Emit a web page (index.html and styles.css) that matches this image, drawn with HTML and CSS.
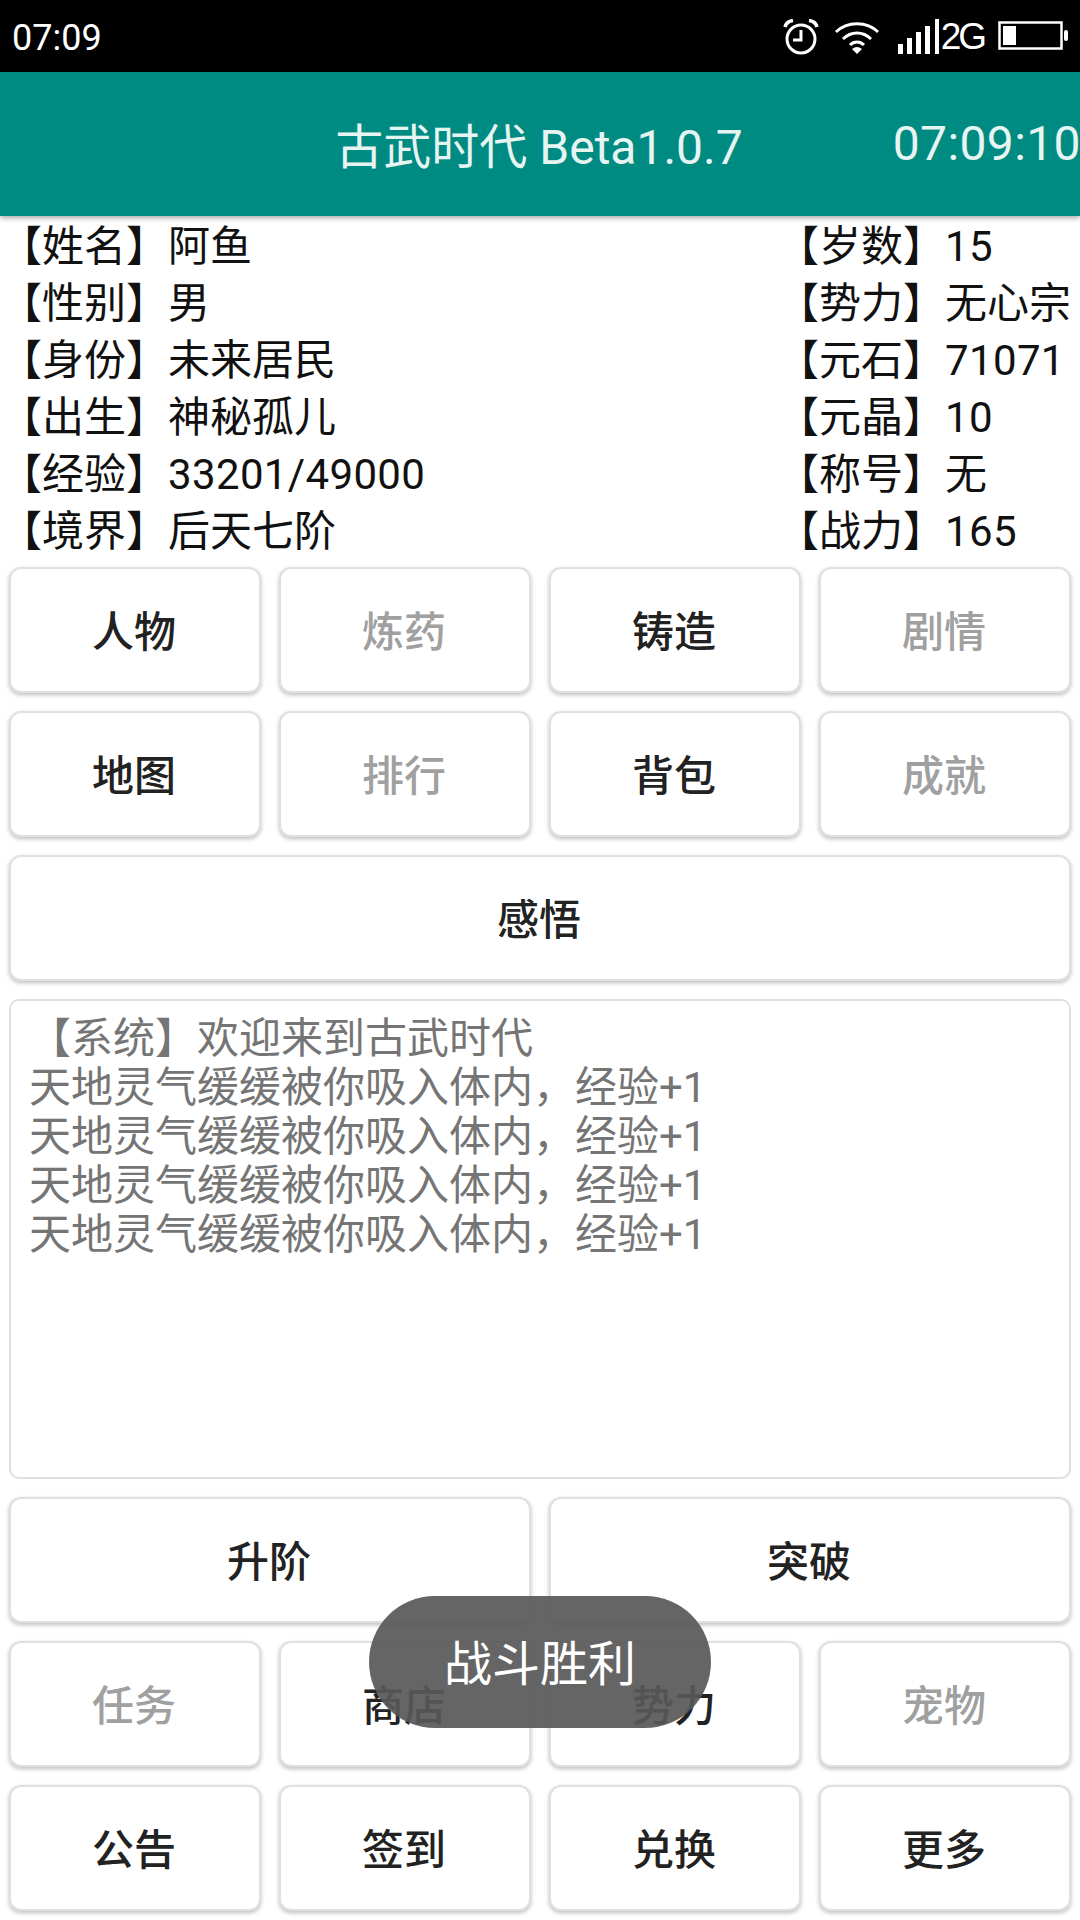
FILE: index.html
```html
<!DOCTYPE html>
<html lang="zh-CN">
<head>
<meta charset="utf-8">
<title>古武时代</title>
<link rel="stylesheet" href="styles.css">
</head>
<body>
<div class="screen">
  <header class="status">
    <span class="clock">07:09</span>
    <div class="status-icons">
      <svg class="ic-alarm" viewBox="0 0 36 36" width="36" height="36" fill="none" stroke="#fff"><circle cx="18" cy="20" r="14" stroke-width="3"/><path d="M18 11v10h-8" stroke-width="3"/><path d="M2 8C3 4 6 2 10 1.500M34 8C33 4 30 2 26 1.500" stroke-width="3.500"/></svg>
      <svg class="ic-wifi" viewBox="0 0 46 36" width="46" height="36" fill="none" stroke="#fff" stroke-width="3"><path d="M2 13C13 2 33 2 44 13"/><path d="M9 20C17 12 29 12 37 20"/><path d="M16 26C20 22 26 22 30 26"/><path d="M18 30L23 35L28 30Q23 26 18 30Z" fill="#fff" stroke="none"/></svg>
      <svg class="ic-signal" viewBox="0 0 42 36" width="42" height="36" fill="#fff"><rect x="0" y="25" width="5" height="10"/><rect x="9" y="19" width="5" height="16"/><rect x="18" y="13" width="5" height="22"/><rect x="27" y="7" width="5" height="28"/><rect x="37" y="0" width="4" height="35"/></svg>
      <span class="net">2G</span>
      <svg class="ic-batt" viewBox="0 0 72 32" width="72" height="32" fill="none"><rect x="1.500" y="1.500" width="62" height="26" stroke="#fff" stroke-width="2.500"/><rect x="5" y="5" width="13" height="19" fill="#fff"/><rect x="66" y="9" width="4" height="11" rx="2" fill="#fff"/></svg>
    </div>
  </header>

  <div class="toolbar">
    <span class="title">古武时代 Beta1.0.7</span>
    <span class="toolbar-time">07:09:10</span>
  </div>

  <section class="info">
    <div class="info-col">
      <div>【姓名】阿鱼</div>
      <div>【性别】男</div>
      <div>【身份】未来居民</div>
      <div>【出生】神秘孤儿</div>
      <div>【经验】<span class="num">33201/49000</span></div>
      <div>【境界】后天七阶</div>
    </div>
    <div class="info-col info-right">
      <div>【岁数】<span class="num">15</span></div>
      <div>【势力】无心宗</div>
      <div>【元石】<span class="num">71071</span></div>
      <div>【元晶】<span class="num">10</span></div>
      <div>【称号】无</div>
      <div>【战力】<span class="num">165</span></div>
    </div>
  </section>

  <main class="panel">
    <div class="row four">
      <div class="btn">人物</div>
      <div class="btn off">炼药</div>
      <div class="btn">铸造</div>
      <div class="btn off">剧情</div>
    </div>
    <div class="row four">
      <div class="btn">地图</div>
      <div class="btn off">排行</div>
      <div class="btn">背包</div>
      <div class="btn off">成就</div>
    </div>
    <div class="row one">
      <div class="btn">感悟</div>
    </div>
    <div class="log">
      <div>【系统】欢迎来到古武时代</div>
      <div>天地灵气缓缓被你吸入体内，经验+1</div>
      <div>天地灵气缓缓被你吸入体内，经验+1</div>
      <div>天地灵气缓缓被你吸入体内，经验+1</div>
      <div>天地灵气缓缓被你吸入体内，经验+1</div>
    </div>
    <div class="row two">
      <div class="btn">升阶</div>
      <div class="btn">突破</div>
    </div>
    <div class="row four">
      <div class="btn off">任务</div>
      <div class="btn">商店</div>
      <div class="btn">势力</div>
      <div class="btn off">宠物</div>
    </div>
    <div class="row four">
      <div class="btn">公告</div>
      <div class="btn">签到</div>
      <div class="btn">兑换</div>
      <div class="btn">更多</div>
    </div>
  </main>

  <div class="toast">战斗胜利</div>
</div>
</body>
</html>
```
FILE: styles.css
```css
* { box-sizing: border-box; }
html, body { margin: 0; padding: 0; }
body {
  width: 1080px;
  height: 1920px;
  background: #fff;
  font-family: Roboto, "Noto Sans CJK SC", sans-serif;
  overflow: hidden;
}
.screen {
  position: relative;
  width: 1080px;
  height: 1920px;
  overflow: hidden;
}
.status {
  height: 72px;
  background: #000;
  color: #fff;
  display: flex;
  align-items: center;
  justify-content: space-between;
  padding: 2px 10px 0 12px;
}
.clock { font-size: 36px; padding-top: 2px; }
.status-icons {
  display: flex;
  align-items: center;
}
.ic-alarm { margin-right: 15px; }
.ic-wifi { margin-right: 18px; }
.net {
  font-size: 37px;
  letter-spacing: -3px;
  margin: 0 14px 0 1px;
  font-family: "Liberation Sans", sans-serif;
}
.toolbar {
  position: relative;
  z-index: 1;
  height: 144px;
  background: #008b82;
  color: #e6f4f2;
  font-size: 48px;
  padding-bottom: 2px;
  display: flex;
  align-items: center;
  justify-content: flex-end;
  white-space: nowrap;
  box-shadow: 0 2px 5px rgba(0, 0, 0, .35);
  overflow: hidden;
}
.title { margin-right: 150px; }
.toolbar-time { margin-right: -1px; letter-spacing: .4px; }
.info {
  display: flex;
  justify-content: space-between;
  color: #111;
  font-size: 42px;
  line-height: 57px;
  padding-top: 2px;
}
.num { letter-spacing: .35px; }
.info-col { white-space: nowrap; }
.info-right { width: 303px; }
.panel {
  display: flex;
  flex-direction: column;
  gap: 18px;
  padding: 7px 9px 0;
}
.row { display: grid; gap: 18px; }
.four { grid-template-columns: repeat(4, 1fr); }
.two { grid-template-columns: repeat(2, 1fr); }
.one { grid-template-columns: 1fr; }
.btn {
  height: 126px;
  background: #fff;
  border: 2px solid #e0e0e0;
  border-radius: 12px;
  box-shadow: 0 2px 4px rgba(0, 0, 0, .26);
  color: #222;
  font-size: 42px;
  font-weight: 500;
  padding: 0 2px 4px 0;
  display: flex;
  align-items: center;
  justify-content: center;
}
.off { color: #a0a0a0; }
.log {
  height: 480px;
  border: 2px solid #e0e0e0;
  border-radius: 10px;
  padding: 13px 18px;
  color: #757575;
  font-size: 42px;
  line-height: 49px;
  white-space: nowrap;
}
.toast {
  position: absolute;
  left: 369px;
  top: 1596px;
  width: 342px;
  height: 132px;
  border-radius: 66px;
  background: rgba(88, 88, 88, .92);
  color: #fff;
  font-size: 48px;
  padding-bottom: 4px;
  display: flex;
  align-items: center;
  justify-content: center;
}
```
